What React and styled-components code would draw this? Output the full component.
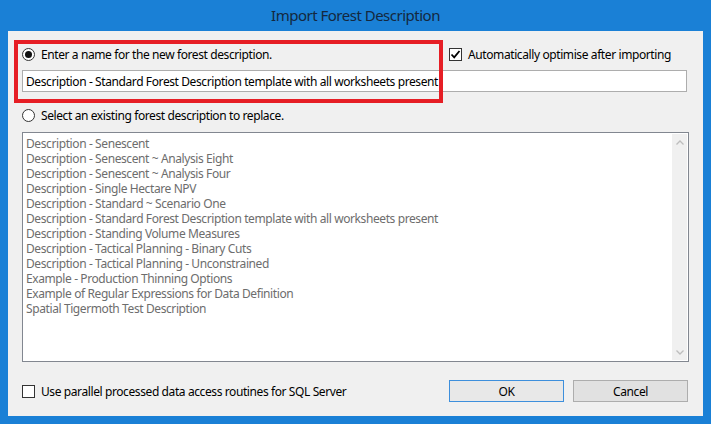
import React from "react";
import styled, { createGlobalStyle } from "styled-components";

const Global = createGlobalStyle`
  html, body { margin: 0; padding: 0; }
  body { width: 711px; height: 424px; overflow: hidden; background: #1a80d6; }
  * { box-sizing: border-box; }
`;

const Window = styled.div`
  width: 711px;
  height: 424px;
  display: flex;
  flex-direction: column;
  background: #1a80d6;
  padding: 0 8px 8px 8px;
  font-family: "Noto Sans", "Open Sans", sans-serif;
  font-size: 12px;
  letter-spacing: -0.4px;
`;

const TitleBar = styled.div`
  height: 31px;
  display: flex;
  align-items: center;
  justify-content: center;
  color: #14283e;
  font-size: 15px;
  letter-spacing: -0.5px;
  padding-bottom: 1px;
`;

const Client = styled.div`
  position: relative;
  flex: 1;
  background: #f0f0f0;
  display: flex;
  flex-direction: column;
  padding: 17px 15px 0 14px;
`;

const TopRow = styled.div`
  display: grid;
  grid-template-columns: 427px 1fr;
  height: 13px;
  align-items: center;
`;

const Option = styled.label`
  display: flex;
  align-items: center;
  gap: 6px;
  color: #000;
  white-space: nowrap;
  line-height: 13px;
`;

const Radio = styled.span`
  width: 13px;
  height: 13px;
  border-radius: 50%;
  border: 1px solid #333;
  background: #fff;
  display: flex;
  align-items: center;
  justify-content: center;
  flex: none;
  &::after {
    content: "";
    width: 7px;
    height: 7px;
    border-radius: 50%;
    background: ${(p) => (p.$checked ? "#111" : "transparent")};
  }
`;

const Check = styled.span`
  width: 13px;
  height: 13px;
  border: 1px solid #333;
  background: #fff;
  display: flex;
  align-items: center;
  justify-content: center;
  flex: none;
`;

const TextBox = styled.div`
  margin-top: 9px;
  height: 22px;
  border: 1px solid #adadad;
  background: #fff;
  padding: 0 3px;
  display: flex;
  align-items: center;
  color: #000;
  white-space: nowrap;
  margin-right: 1px;
`;

const SecondRow = styled.div`
  margin-top: 17px;
  height: 13px;
  display: flex;
  align-items: center;
`;

const ListBox = styled.div`
  margin-top: 10px;
  height: 230px;
  border: 1px solid #828790;
  background: #fff;
  display: flex;
  margin-right: -1px;
`;

const Items = styled.ul`
  flex: 1;
  list-style: none;
  margin: 0;
  padding: 3px 3px;
`;

const Item = styled.li`
  height: 15px;
  line-height: 15px;
  color: #6d6d6d;
  white-space: nowrap;
`;

const ScrollBar = styled.div`
  width: 17px;
  background: #f0f0f0;
  display: flex;
  flex-direction: column;
  justify-content: space-between;
  align-items: center;
  padding: 6px 0 5px;
  border: 1px solid #fff;
`;

const BottomRow = styled.div`
  margin-top: 18px;
  display: flex;
  align-items: center;
  height: 22px;
`;

const Spacer = styled.div`
  flex: 1;
`;

const Button = styled.button`
  width: 115px;
  height: 22px;
  margin-left: ${(p) => p.$gap || 0}px;
  font-family: inherit;
  font-size: 12px;
  letter-spacing: inherit;
  color: #000;
  background: ${(p) => (p.$default ? "#e8e8e8" : "#e1e1e1")};
  border: 1px solid ${(p) => (p.$default ? "#3d8fdc" : "#adadad")};
  padding: 0;
`;

const Highlight = styled.div`
  position: absolute;
  left: 6px;
  top: 9px;
  width: 429px;
  height: 63px;
  border: 4px solid #e61e25;
  pointer-events: none;
`;

const Chevron = ({ up }) => (
  <svg width="8" height="5" viewBox="0 0 8 5">
    <path
      d={up ? "M0.5 4.5 L4 1 L7.5 4.5" : "M0.5 0.5 L4 4 L7.5 0.5"}
      fill="none"
      stroke="#bdbdbd"
      strokeWidth="1.3"
    />
  </svg>
);

const items = [
  "Description - Senescent",
  "Description - Senescent ~ Analysis Eight",
  "Description - Senescent ~ Analysis Four",
  "Description - Single Hectare NPV",
  "Description - Standard ~ Scenario One",
  "Description - Standard Forest Description template with all worksheets present",
  "Description - Standing Volume Measures",
  "Description - Tactical Planning - Binary Cuts",
  "Description - Tactical Planning - Unconstrained",
  "Example - Production Thinning Options",
  "Example of Regular Expressions for Data Definition",
  "Spatial Tigermoth Test Description",
];

export default function App() {
  return (
    <>
      <Global />
      <Window>
        <TitleBar>Import Forest Description</TitleBar>
        <Client>
          <TopRow>
            <Option>
              <Radio $checked />
              Enter a name for the new forest description.
            </Option>
            <Option>
              <Check>
                <svg width="11" height="11" viewBox="0 0 11 11">
                  <path d="M1.5 5.5 L4.2 8.3 L9.5 2" fill="none" stroke="#000" strokeWidth="1.8" />
                </svg>
              </Check>
              Automatically optimise after importing
            </Option>
          </TopRow>
          <TextBox>Description - Standard Forest Description template with all worksheets present</TextBox>
          <SecondRow>
            <Option>
              <Radio />
              Select an existing forest description to replace.
            </Option>
          </SecondRow>
          <ListBox>
            <Items>
              {items.map((t) => (
                <Item key={t}>{t}</Item>
              ))}
            </Items>
            <ScrollBar>
              <Chevron up />
              <Chevron />
            </ScrollBar>
          </ListBox>
          <BottomRow>
            <Option>
              <Check />
              Use parallel processed data access routines for SQL Server
            </Option>
            <Spacer />
            <Button $default>OK</Button>
            <Button $gap={9}>Cancel</Button>
          </BottomRow>
          <Highlight />
        </Client>
      </Window>
    </>
  );
}
